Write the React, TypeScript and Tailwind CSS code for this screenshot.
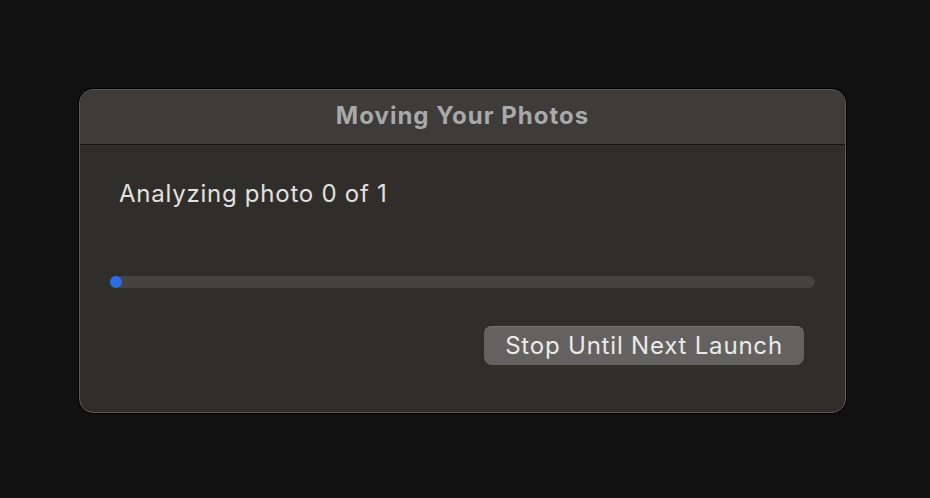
// Dialog "Moving Your Photos": progression de l'analyse.
const font = { fontFamily: "Inter, 'Liberation Sans', sans-serif" };

export default function App() {
  const done = 0;
  const total = 1;
  const pct = total ? done / total : 0;

  return (
    <div className="h-[498px] w-[930px] bg-[#111111] pl-[79px] pt-[89px]" style={font}>
      <div className="flex h-[324px] w-[767px] flex-col overflow-hidden rounded-[14px] border border-[#5c5b59] bg-[#302e2b] shadow-[0_0_0_1px_#000]">
        <div className="flex h-[55px] shrink-0 items-center justify-center border-b border-[#141312] bg-[#3d3c3a] pb-[3px]">
          <span className="text-[24px] font-bold tracking-[1px] text-[#a9a9a8]">Moving Your Photos</span>
        </div>
        <div className="flex flex-1 flex-col">
          <p className="pl-[39px] pt-[35px] text-[24px] leading-[28px] tracking-[0.75px] text-[#e2e1df]">
            Analyzing photo {done} of {total}
          </p>
          <div className="relative mx-[30px] mt-[68px] h-[12px] rounded-full bg-[#444341]">
            <div
              className="h-[12px] min-w-[12px] rounded-full bg-[#2a6fe4]"
              style={{ width: `${pct * 100}%` }}
            />
          </div>
          <div className="mt-[38px] flex justify-end pr-[41px]">
            <button
              type="button"
              className="h-[39px] w-[320px] rounded-[8px] bg-[#636260] text-[24px] tracking-[0.8px] text-[#ebeae8] shadow-[inset_0_1px_0_#747371]"
            >
              Stop Until Next Launch
            </button>
          </div>
        </div>
      </div>
    </div>
  );
}
